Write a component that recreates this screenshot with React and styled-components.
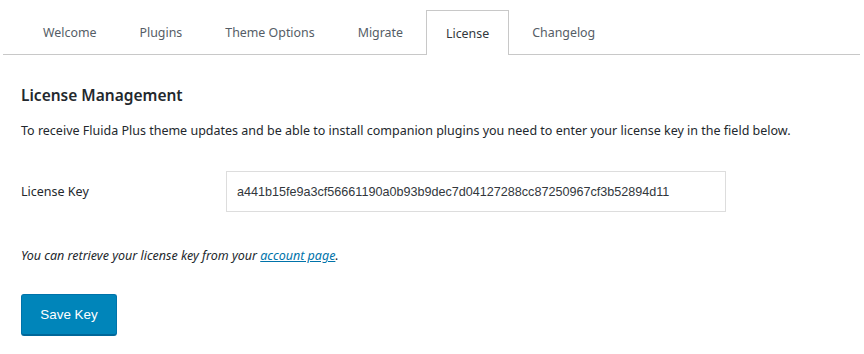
import styled, { createGlobalStyle } from "styled-components";

const GlobalStyle = createGlobalStyle`
  body {
    margin: 0;
    background: #ffffff;
    font-family: "Noto Sans", "Open Sans", sans-serif;
    color: #23282d;
  }
`;

const Page = styled.div`
  width: 864px;
  height: 354px;
  overflow: hidden;
`;

const TabBar = styled.nav`
  display: flex;
  align-items: flex-end;
  gap: 3px;
  margin: 10px 4px 0 3px;
  padding-left: 20px;
  height: 44px;
  border-bottom: 1px solid #c8c8c8;
`;

const Tab = styled.a`
  display: flex;
  align-items: center;
  box-sizing: border-box;
  height: 45px;
  margin-bottom: -1px;
  padding: 0 ${(p) => (p.$active ? "19px" : "20px")};
  font-size: 12.4px;
  color: ${(p) => (p.$active ? "#32373c" : "#555d66")};
  text-decoration: none;
  ${(p) =>
    p.$active &&
    `
    background: #ffffff;
    border: 1px solid #c8c8c8;
    border-bottom: none;
  `}
`;

const Content = styled.section`
  padding: 28px 21px 0;
`;

const Heading = styled.h2`
  margin: 0;
  font-size: 15.5px;
  font-weight: 600;
  line-height: 24px;
  color: #23282d;
`;

const Text = styled.p`
  margin: 14px 0 0;
  font-size: 12.5px;
  line-height: 20px;
  color: #23282d;
`;

const FieldRow = styled.div`
  display: grid;
  grid-template-columns: 205px 500px;
  align-items: center;
  margin-top: 30px;
`;

const Label = styled.label`
  font-size: 12.5px;
  color: #23282d;
`;

const KeyInput = styled.input`
  box-sizing: border-box;
  width: 500px;
  height: 41px;
  border: 1px solid #dddddd;
  padding: 0 10px;
  font-family: "Liberation Sans", Arial, sans-serif;
  font-size: 12.6px;
  color: #32373c;
  outline: none;
`;

const Note = styled.p`
  margin: 34px 0 0;
  font-size: 12.5px;
  font-style: italic;
  line-height: 20px;
  color: #23282d;
`;

const NoteLink = styled.a`
  color: #0073aa;
  text-decoration: underline;
`;

const SaveButton = styled.button`
  display: block;
  margin-top: 28px;
  width: 96px;
  height: 42px;
  background: #0085ba;
  border: 1px solid #0073aa;
  border-bottom: 2px solid #006799;
  border-radius: 3px;
  color: #ffffff;
  font-family: "Liberation Sans", Arial, sans-serif;
  font-size: 13.4px;
  cursor: pointer;
`;

const tabs = ["Welcome", "Plugins", "Theme Options", "Migrate", "License", "Changelog"];

export default function App() {
  return (
    <Page>
      <GlobalStyle />
      <TabBar>
        {tabs.map((t) => (
          <Tab key={t} $active={t === "License"}>
            {t}
          </Tab>
        ))}
      </TabBar>
      <Content>
        <Heading>License Management</Heading>
        <Text>
          To receive Fluida Plus theme updates and be able to install companion plugins you need to enter your
          license key in the field below.
        </Text>
        <FieldRow>
          <Label>License Key</Label>
          <KeyInput readOnly value="a441b15fe9a3cf56661190a0b93b9dec7d04127288cc87250967cf3b52894d11" />
        </FieldRow>
        <Note>
          You can retrieve your license key from your <NoteLink href="#">account page</NoteLink>.
        </Note>
        <SaveButton>Save Key</SaveButton>
      </Content>
    </Page>
  );
}
